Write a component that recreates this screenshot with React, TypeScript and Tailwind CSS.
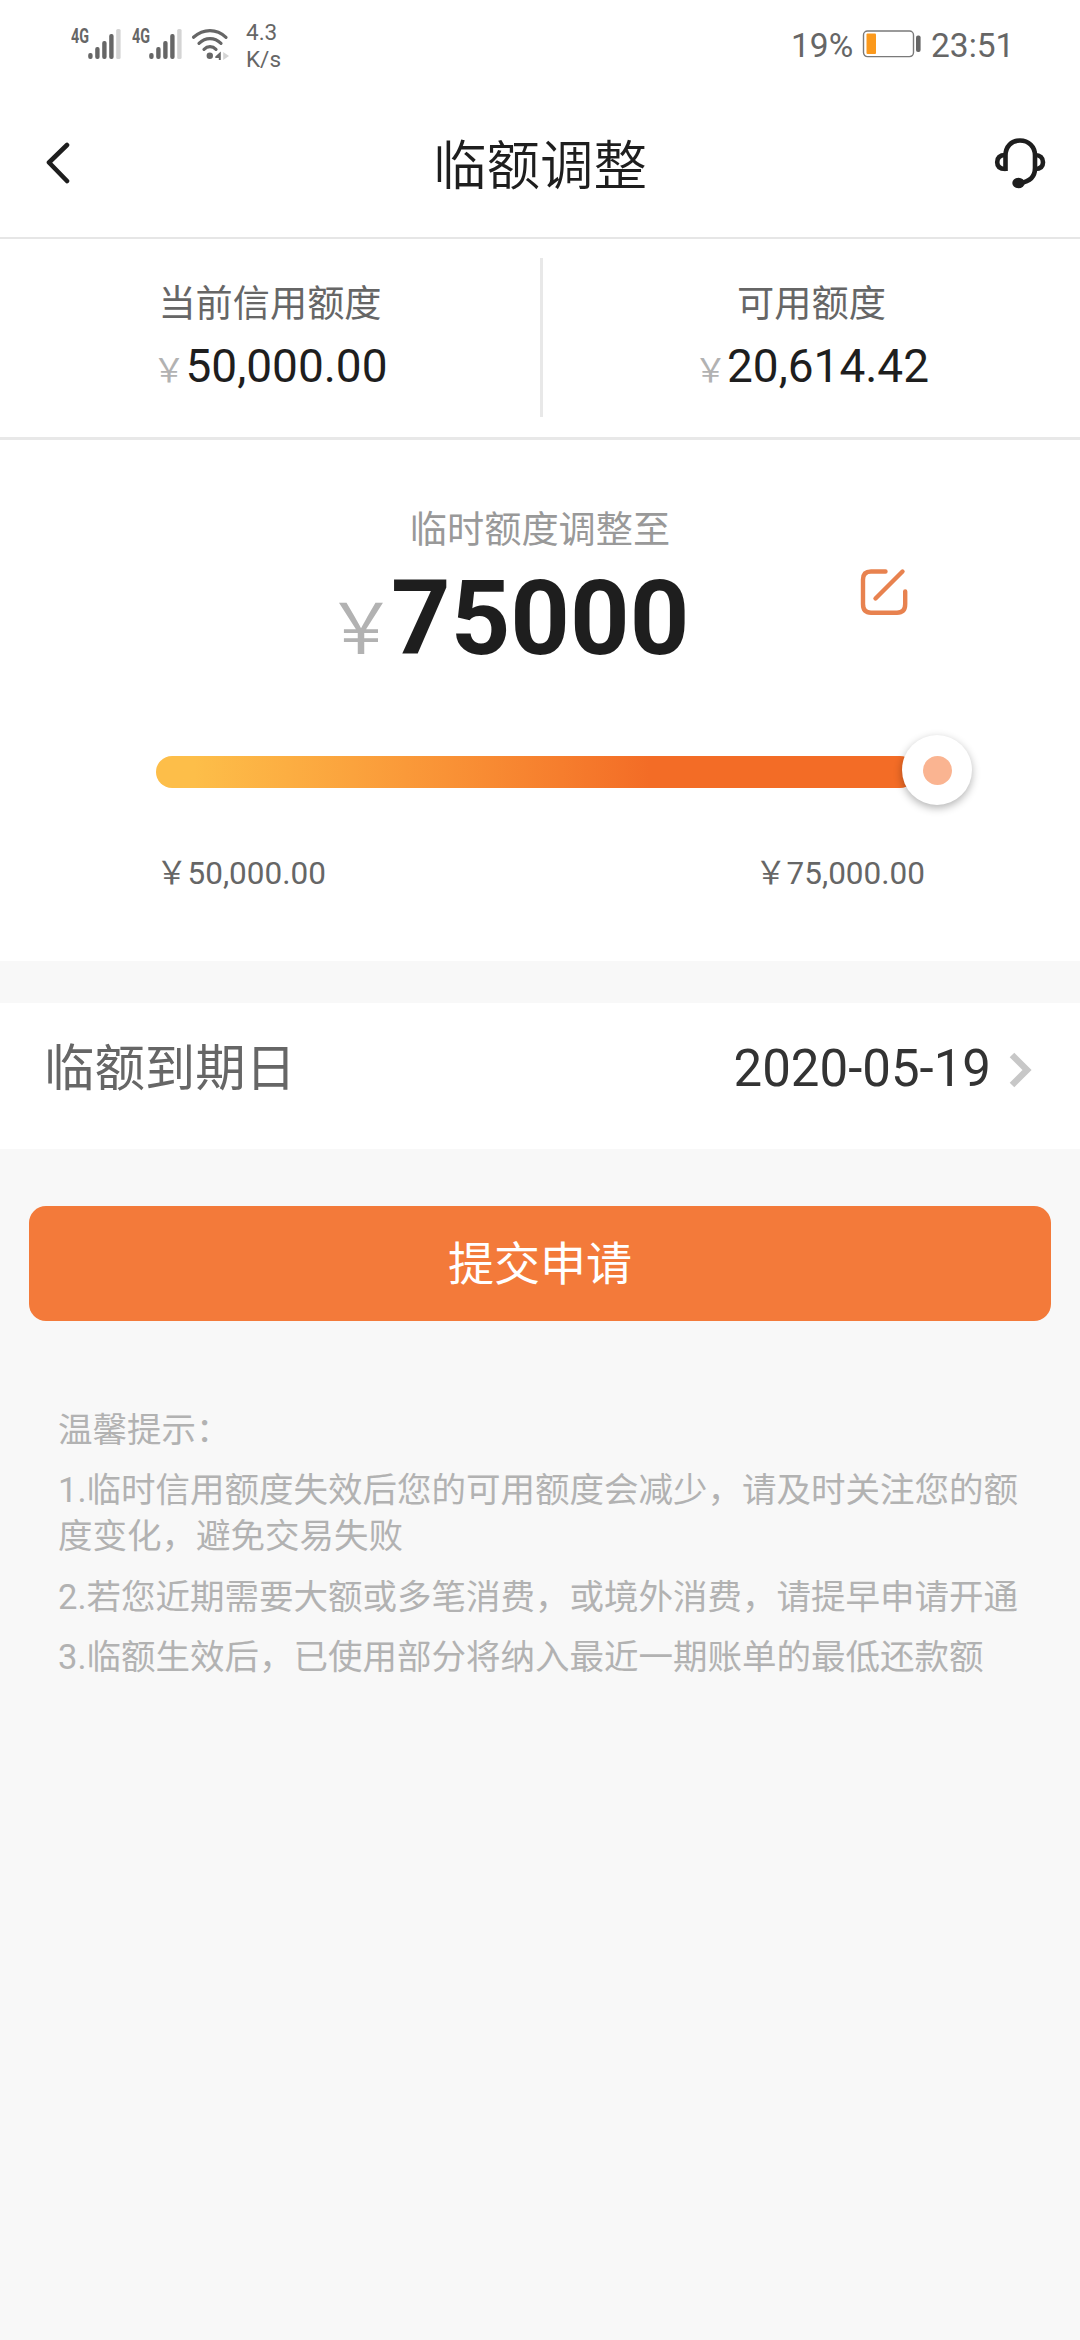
import React from "react";

function Signal() {
  return (
    <svg width="50" height="34" viewBox="0 0 50 34" fill="#666666">
      <text x="0" y="17" fontSize="19.5" fontWeight="700" textLength="18" lengthAdjust="spacingAndGlyphs" fontFamily="Roboto, sans-serif">4G</text>
      <rect x="17.2" y="27" width="4.4" height="6" rx="2" />
      <rect x="24.2" y="21" width="4.4" height="12" rx="2" />
      <rect x="31.2" y="15" width="4.4" height="18" rx="2" />
      <rect x="38.2" y="8" width="4.4" height="25" rx="2" />
      <rect x="45.2" y="3" width="4.4" height="30" rx="1.5" fill="#d4d4d4" />
    </svg>
  );
}

function Wifi() {
  return (
    <svg width="40" height="34" viewBox="0 0 40 34" fill="none" stroke="#666666" strokeWidth="3.2" strokeLinecap="round">
      <path d="M2.5 11.3C12.5 2.3 25.5 2.3 35 11.3" />
      <path d="M8 17.3C14.5 11 23.5 11 30 17.3" />
      <path d="M13 23.3C16.5 19.8 21.5 19.8 25 23.3" />
      <circle cx="18.8" cy="29.8" r="3.2" fill="#666666" stroke="none" />
      <path d="M29.8 25.5V34H27.8V32H24.3V30.4Z" fill="#666666" stroke="none" />
      <path d="M32.2 26V34L38 30Z" fill="#d4d4d4" stroke="none" />
    </svg>
  );
}

function Battery() {
  return (
    <svg width="60" height="28" viewBox="0 0 60 28">
      <rect x="1.5" y="1" width="50" height="25.6" rx="4" fill="none" stroke="#7a7a7a" strokeWidth="1.4" />
      <rect x="4.5" y="3.5" width="9.5" height="20.5" rx="1" fill="#fb991c" />
      <rect x="54" y="5.5" width="4.6" height="16.6" rx="2" fill="#666666" />
    </svg>
  );
}

function StatusBar() {
  return (
    <div className="flex h-[90px] items-start justify-between pr-[65px] pl-[71px] text-[#666666]">
      <div className="flex">
        <div className="mt-[26px] flex">
          <Signal />
          <div className="ml-[11px]"><Signal /></div>
          <div className="ml-[9px]"><Wifi /></div>
        </div>
        <div className="mt-[19px] ml-[15px] text-[22.5px] leading-[26.5px]">
          <div>4.3</div>
          <div>K/s</div>
        </div>
      </div>
      <div className="mt-[26px] flex text-[33.5px] leading-[40px]">
        <span className="w-[71px]">19%</span>
        <div className="mt-[4px] mr-[9px]"><Battery /></div>
        <span className="w-[84px]">23:51</span>
      </div>
    </div>
  );
}

function Header() {
  return (
    <header className="flex h-[149px] items-start border-b-2 border-[#e6e6e6] pr-[34px] pl-[44px]">
      <svg className="mt-[52px]" width="52" height="42" viewBox="0 0 52 42" fill="none" stroke="#1e1e1e" strokeWidth="4.6" strokeLinecap="round" strokeLinejoin="round">
        <path d="M23 3L5 20.5L23 39" />
      </svg>
      <h1 className="mt-[39px] ml-[337px] text-[53.5px] leading-[76px] font-[350] text-[#1e1e1e]">临额调整</h1>
      <svg className="mt-[47px] ml-auto" width="52" height="52" viewBox="0 0 52 52" fill="none" stroke="#1e1e1e" strokeWidth="4.6">
        <path d="M11.5 34V18.5C11.5 9.5 17.5 3.5 26 3.5S41 9.5 41 18.5V31C41 39 37 44.5 26 46" />
        <path d="M11.5 18C6 18 3.2 20.8 3.2 25.3S6 32 11.5 32" />
        <path d="M41 18C46 18 49 20.8 49 25.3S46 32 41 32" />
        <ellipse cx="24.5" cy="46" rx="6.2" ry="5.2" fill="#1e1e1e" stroke="none" />
      </svg>
    </header>
  );
}

function Stat({ label, value, className }: { label: string; value: string; className: string }) {
  return (
    <div className={className}>
      <div className="mt-[37px] text-[37.2px] leading-[56px] text-[#666666]">{label}</div>
      <div className="flex items-baseline text-[46px] leading-[69px] text-[#1e1e1e]">
        <span className="text-[33px] leading-none text-[#b2b2b2]">￥</span>
        {value}
      </div>
    </div>
  );
}

export default function App() {
  return (
    <div className="flex min-h-[2340px] w-[1080px] flex-col bg-[#f8f8f8] font-['Roboto','Noto_Sans_CJK_SC',sans-serif]">
      <div className="bg-white">
        <StatusBar />
        <Header />
        <section className="flex h-[201px] items-start border-b-3 border-[#e8e8e8]">
          <Stat label="当前信用额度" value="50,000.00" className="flex w-[540px] flex-col items-center" />
          <div className="mt-[19px] h-[159px] w-[3px] bg-[#e8e8e8]" />
          <Stat label="可用额度" value="20,614.42" className="flex w-[537px] flex-col items-center" />
        </section>
        <section className="h-[521px]">
          <div className="flex flex-col items-center pt-[62px] text-[37.2px] leading-[56px] text-[#999999]">临时额度调整至</div>
          <div className="flex items-start pl-[326px]">
            <div className="flex w-[534px] items-baseline text-[104px] leading-[122px] font-bold text-[#1e1e1e]">
              <span className="mr-[-5px] text-[70px] leading-none font-normal text-[#b2b2b2]">￥</span>
              75000
            </div>
            <svg className="mt-[10px]" width="50" height="50" viewBox="0 0 50 50" fill="none" stroke="#e8824f" strokeWidth="4.4" strokeLinecap="round">
              <path d="M25.5 3.5H11C5.8 3.5 3 6.3 3 11.5V36C3 42 5.8 44.7 11 44.7H37C42.3 44.7 45.2 42 45.2 36V23.5" />
              <path d="M42.5 3.5L15.5 30.5" />
            </svg>
          </div>
          <div className="mt-[55px] flex h-[70px] items-center pl-[156px]">
            <div className="mt-[3px] h-[32px] w-[760px] rounded-full bg-linear-to-r from-[#fdbe49] from-5% to-[#f36c26] to-65%" />
            <div className="-ml-[14px] flex size-[70px] items-center justify-center rounded-full bg-white shadow-[0_3px_8px_rgba(0,0,0,0.3)]">
              <div className="size-[29px] rounded-full bg-[#fab491]" />
            </div>
          </div>
          <div className="mt-[47px] flex justify-between pr-[155px] pl-[156px] text-[31.5px] leading-[44px] text-[#666666]">
            <span>￥50,000.00</span>
            <span>￥75,000.00</span>
          </div>
        </section>
      </div>
      <div className="mt-[42px] flex h-[146px] items-start bg-white pr-[46px] pl-[44px]">
        <span className="mt-[29px] text-[50.4px] leading-[74px] text-[#666666]">临额到期日</span>
        <span className="mt-[29px] ml-auto text-[51px] leading-[74px] text-[#333333]">2020-05-19</span>
        <svg className="mt-[49px] ml-[17px]" width="26" height="36" viewBox="0 0 26 36" fill="none" stroke="#c7c7c7" strokeWidth="6.5">
          <path d="M4 3L19 18L4 33" />
        </svg>
      </div>
      <button className="mx-[29px] mt-[57px] h-[115px] rounded-[17px] bg-[#f37a3a] pt-[1px] text-[46px] leading-[68px] text-white">提交申请</button>
      <div className="flex flex-col gap-[14.5px] pt-[85.5px] pr-[50px] pl-[58px] text-[34.5px] leading-[46px] text-[#b2b2b2]">
        <p>温馨提示：</p>
        <p>1.临时信用额度失效后您的可用额度会减少，请及时关注您的额<br />度变化，避免交易失败</p>
        <p>2.若您近期需要大额或多笔消费，或境外消费，请提早申请开通</p>
        <p>3.临额生效后，已使用部分将纳入最近一期账单的最低还款额</p>
      </div>
    </div>
  );
}
